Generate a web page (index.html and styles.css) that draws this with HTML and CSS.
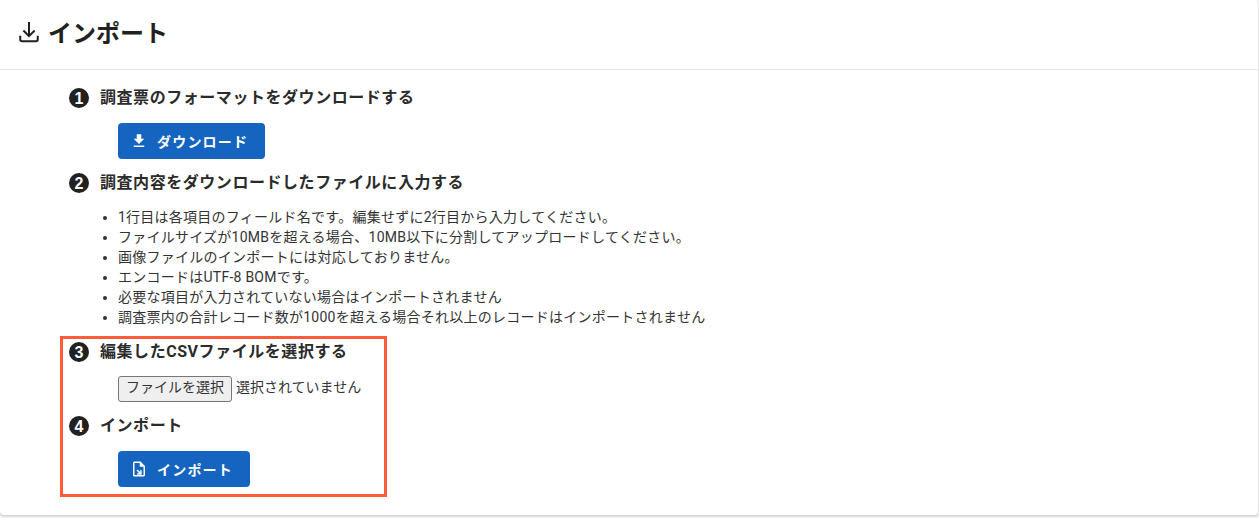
FILE: index.html
```html
<!DOCTYPE html>
<html lang="ja">
<head>
<meta charset="UTF-8" />
<title>インポート</title>
<link rel="stylesheet" href="styles.css">
</head>
<body>

<main class="card">
  <header class="card-header">
    <svg class="title-icon" viewBox="0 0 24 24"><path d="M12 4v11.5M7.5 10.8l4.5 4.5 4.5-4.5M5 15v3c0 .9.6 1.4 1.4 1.4h11.2c.8 0 1.4-.5 1.4-1.4v-3" fill="none" stroke="#212121" stroke-width="1.6"/></svg>
    <h1>インポート</h1>
  </header>

  <div class="card-body">
    <section class="step">
      <h2 class="step-title">
        <svg class="step-num" viewBox="0 0 20 20"><circle cx="10" cy="10" r="10"/><text x="10" y="16">1</text></svg>
        調査票のフォーマットをダウンロードする
      </h2>
      <div class="step-content">
        <button class="btn btn-download">
          <svg viewBox="0 0 24 24"><path d="M19 9h-4V3H9v6H5l7 7 7-7zM5 18v2h14v-2H5z" fill="#fff"/></svg>
          ダウンロード
        </button>
      </div>
    </section>

    <section class="step step-list">
      <h2 class="step-title">
        <svg class="step-num" viewBox="0 0 20 20"><circle cx="10" cy="10" r="10"/><text x="10" y="16">2</text></svg>
        調査内容をダウンロードしたファイルに入力する
      </h2>
      <ul class="notes">
        <li>1行目は各項目のフィールド名です。編集せずに2行目から入力してください。</li>
        <li>ファイルサイズが10MBを超える場合、10MB以下に分割してアップロードしてください。</li>
        <li>画像ファイルのインポートには対応しておりません。</li>
        <li>エンコードはUTF-8 BOMです。</li>
        <li>必要な項目が入力されていない場合はインポートされません</li>
        <li>調査票内の合計レコード数が1000を超える場合それ以上のレコードはインポートされません</li>
      </ul>
    </section>

    <div class="highlight">
      <section class="step">
        <h2 class="step-title">
          <svg class="step-num" viewBox="0 0 20 20"><circle cx="10" cy="10" r="10"/><text x="10" y="16">3</text></svg>
          編集したCSVファイルを選択する
        </h2>
        <div class="file-row">
          <button class="file-btn">ファイルを選択</button>
          <span class="file-name">選択されていません</span>
        </div>
      </section>

      <section class="step">
        <h2 class="step-title">
          <svg class="step-num" viewBox="0 0 20 20"><circle cx="10" cy="10" r="10"/><text x="10" y="16">4</text></svg>
          インポート
        </h2>
        <div class="step-content">
          <button class="btn btn-import">
            <svg viewBox="0 0 24 24"><path d="M14 2H6c-1.1 0-2 .9-2 2v16c0 1.1.9 2 2 2h12c1.1 0 2-.9 2-2V8l-6-6zm4 18H6V4h7v5h5v11z" fill="#fff"/><path d="M15.5 19.5h-6v-2h2.6l-3.4-3.4 1.4-1.4 3.4 3.4v-2.6h2z" fill="#fff"/></svg>
            インポート
          </button>
        </div>
      </section>
    </div>
  </div>
</main>

</body>
</html>
```

FILE: styles.css
```css
* {
  box-sizing: border-box;
}
html, body {
  margin: 0;
  height: 100%;
}
body {
  background: #f1f1f5;
  color: #212121;
  font-family: Roboto, "Noto Sans CJK JP", sans-serif;
  overflow: hidden;
}

.card {
  width: 1258px;
  height: 515px;
  background: #fff;
  border-radius: 0 4px 4px 4px;
  box-shadow: 0 1px 2px rgba(0,0,0,0.18);
}

.card-header {
  display: flex;
  align-items: center;
  gap: 4px;
  height: 70px;
  padding: 0 14px 6px;
  border-bottom: 1px solid #e8e8e8;
}
.title-icon {
  width: 30px;
  height: 30px;
}
.card-header h1 {
  margin: 0;
  font-size: 24px;
  font-weight: 700;
}

.card-body {
  padding: 15px 0 0 69px;
}

.step-title {
  display: flex;
  align-items: center;
  gap: 11px;
  height: 22px;
  margin: 0;
  font-size: 16px;
  font-weight: 700;
  letter-spacing: 0.55px;
  color: #2b2b2b;
}
.step-num {
  width: 20px;
  height: 20px;
  margin-top: 4px;
  flex: none;
}
.step-num circle {
  fill: #212121;
}
.step-num text {
  fill: #fff;
  font-family: "Liberation Sans", sans-serif;
  font-size: 16px;
  font-weight: 700;
  letter-spacing: 0;
  text-anchor: middle;
}

.step-content {
  padding: 16px 0 0 49px;
}

.btn {
  display: inline-flex;
  align-items: center;
  gap: 9px;
  height: 36px;
  padding: 0 17px 0 12px;
  border: 0;
  border-radius: 4px;
  background: #1565c0;
  color: #fff;
  font-family: inherit;
  font-size: 14px;
  font-weight: 700;
  letter-spacing: 1.2px;
}
.btn svg {
  width: 18px;
  height: 18px;
}

.step-list {
  margin-top: 11px;
}
.notes {
  margin: 15px 0 0;
  padding-left: 49px;
  font-size: 14px;
  line-height: 20px;
  letter-spacing: 0.25px;
  color: #333;
}

.highlight {
  width: 327px;
  height: 161px;
  margin: 9px 0 0 -9px;
  padding: 0 0 0 6px;
  border: 3px solid #ff5c3c;
}

.file-row {
  display: flex;
  align-items: center;
  gap: 4px;
  padding: 15px 0 0 49px;
  font-size: 14px;
  color: #333;
}
.file-btn {
  height: 26px;
  padding: 0 7px 4px;
  border: 1px solid #767676;
  border-radius: 3px;
  background: #efefef;
  color: #333;
  font-family: inherit;
  font-size: 14px;
  line-height: 1;
}
.file-name {
  line-height: 1;
  padding-bottom: 4px;
}
.highlight .step + .step {
  margin-top: 11px;
}
```
